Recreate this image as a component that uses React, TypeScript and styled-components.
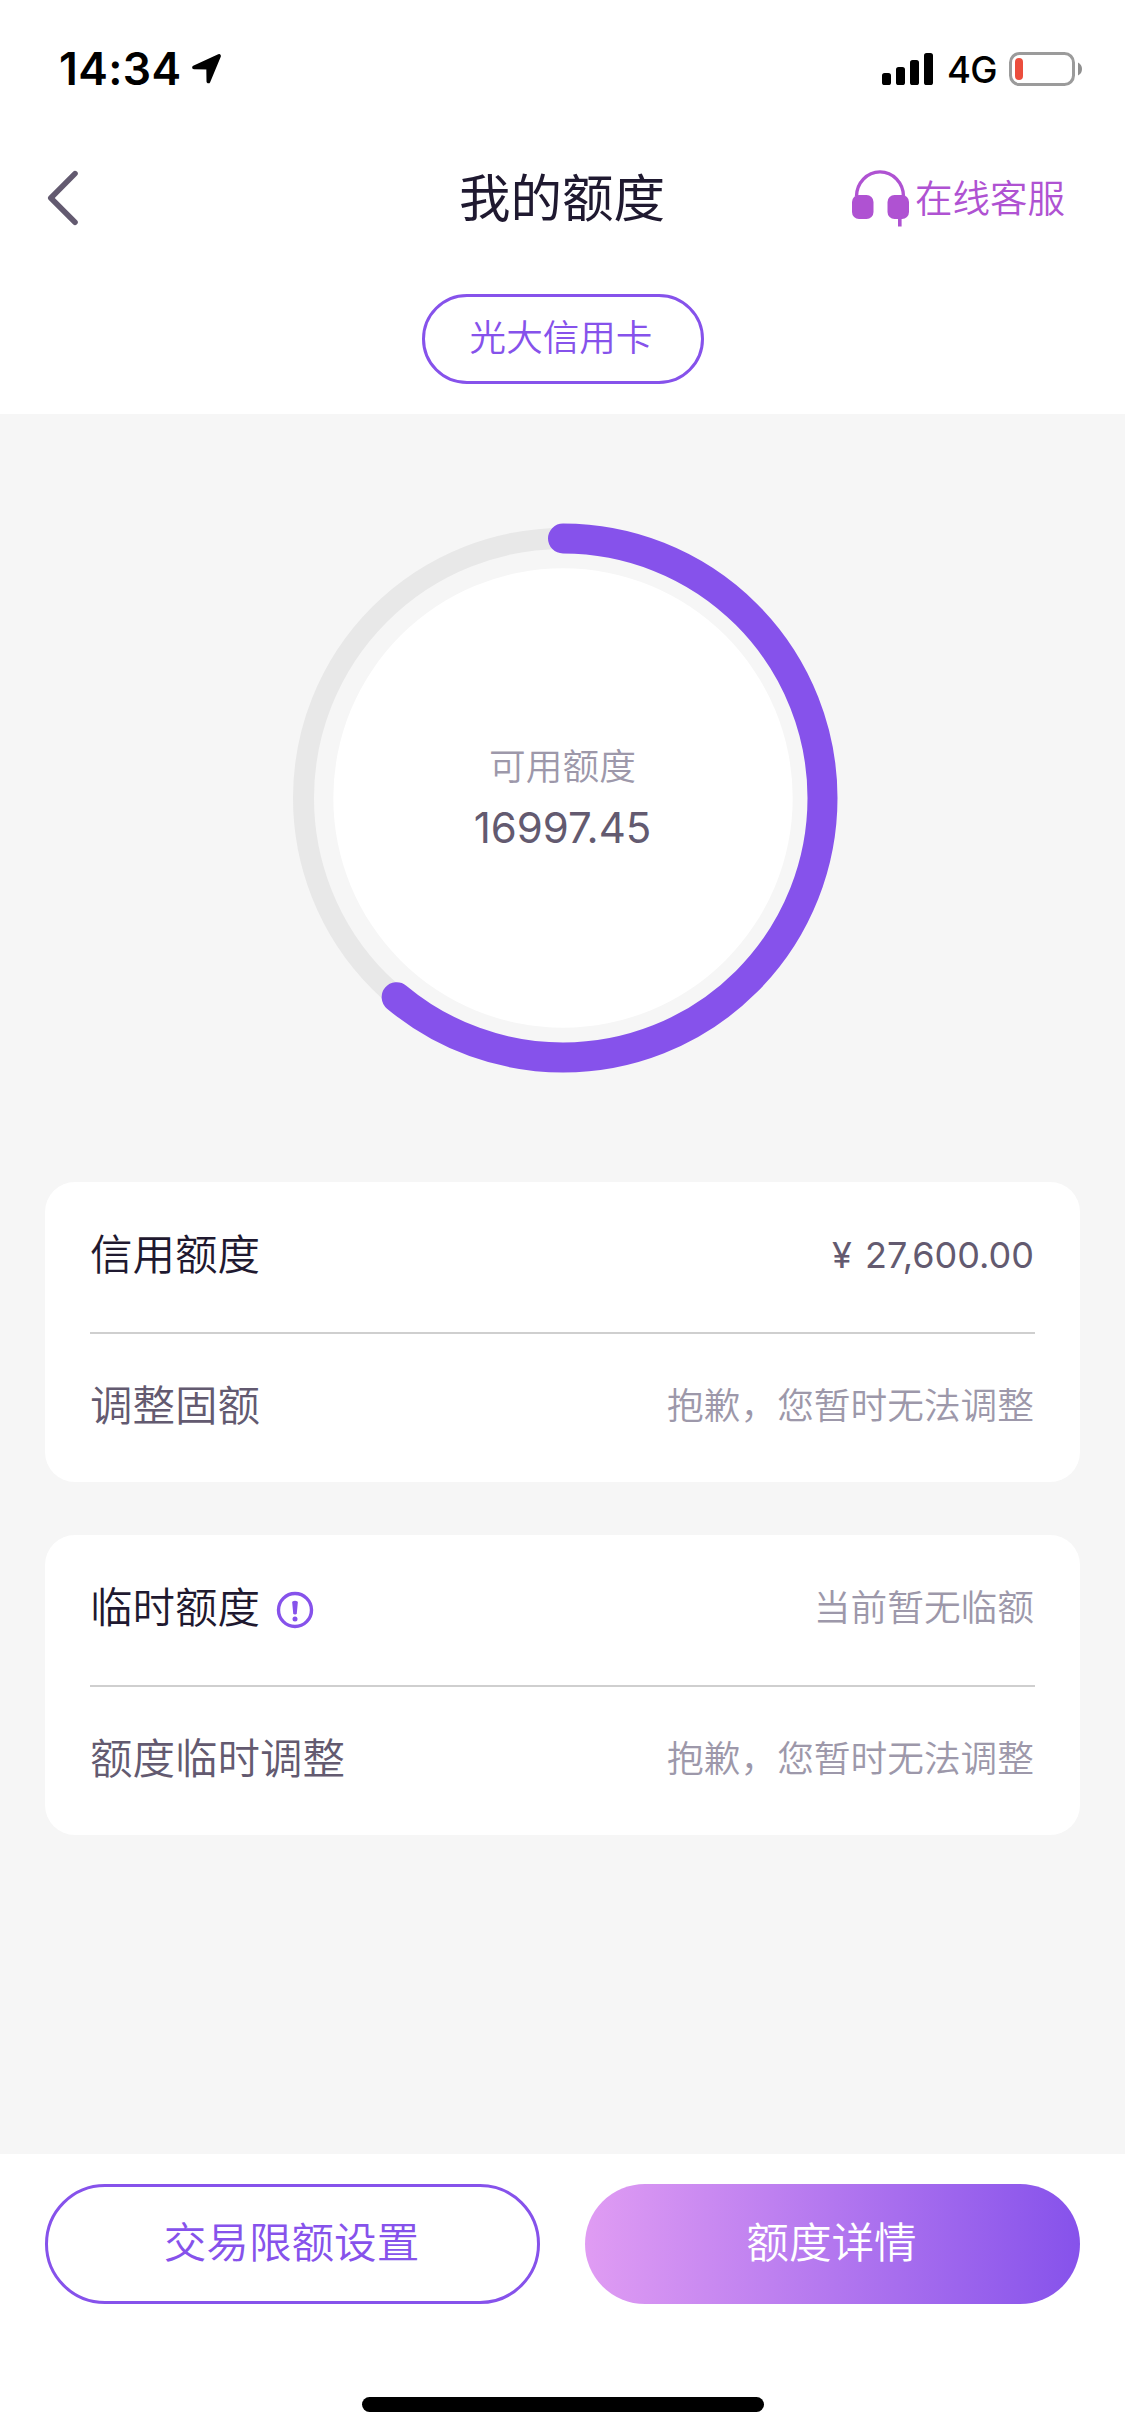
import React from 'react';
import styled, { createGlobalStyle } from 'styled-components';

const colors = {
  ink: '#1f1930',
  plum: '#635a70',
  muted: '#9d98aa',
  violet: '#8652eb',
  orchid: '#af52d2',
  line: '#cfcfcf',
  page: '#f6f6f6',
};

const GlobalStyle = createGlobalStyle`
  * { box-sizing: border-box; }
  body {
    margin: 0;
    background: #fff;
    font-family: Inter, "Noto Sans CJK SC", sans-serif;
    font-weight: 350;
  }
  button { font: inherit; margin: 0; padding: 0; background: none; border: 0; }
`;

const Screen = styled.div`
  width: 1125px;
  height: 2436px;
  display: flex;
  flex-direction: column;
  background: #fff;
`;

const StatusBar = styled.header`
  height: 132px;
  padding: 6px 42px 0 59px;
  display: flex;
  align-items: center;
  justify-content: space-between;
  color: #000;
`;

const StatusGroup = styled.div<{ $gap: number }>`
  display: flex;
  align-items: center;
  gap: ${(p) => p.$gap}px;
`;

const Clock = styled.span`
  width: 121px;
  font-size: 44.5px;
  line-height: 54px;
  font-weight: 600;
  letter-spacing: 0.4px;
  white-space: nowrap;
`;

const Network = styled.span`
  width: 48px;
  font-size: 36.5px;
  line-height: 42px;
  font-weight: 500;
  letter-spacing: -0.8px;
  padding-top: 2px;
`;

const NavBar = styled.nav`
  height: 132px;
  padding: 0 60px 0 46px;
  display: grid;
  grid-template-columns: 1fr auto 1fr;
  align-items: center;
`;

const BackButton = styled.button`
  display: flex;
  justify-self: start;
`;

const Title = styled.h1`
  margin: 0 0 0 13px;
  font-size: 51.5px;
  line-height: 76px;
  font-weight: 400;
  color: ${colors.ink};
`;

const ServiceButton = styled.button`
  display: flex;
  align-items: center;
  justify-self: end;
  gap: 6px;
  color: ${colors.orchid};
  font-size: 37.5px;
  line-height: 56px;
  padding-top: 1px;
`;

const CardTabs = styled.div`
  height: 150px;
  display: flex;
  justify-content: center;
  padding-top: 30px;
`;

const CardTab = styled.button`
  width: 282px;
  height: 90px;
  border: 3px solid ${colors.violet};
  border-radius: 45px;
  color: ${colors.violet};
  font-size: 36.6px;
  line-height: 80px;
  padding: 0 3px 3px 0;
`;

const Content = styled.main`
  flex: 1;
  padding: 109px 45px 0;
  display: flex;
  flex-direction: column;
  align-items: center;
  background: ${colors.page};
`;

const Gauge = styled.section`
  width: 550px;
  height: 550px;
  margin-bottom: 109px;
  display: grid;
  place-items: center;
  > * { grid-area: 1 / 1; }
`;

const GaugeText = styled.div`
  display: flex;
  flex-direction: column;
  align-items: center;
  padding-top: 1px;
`;

const GaugeLabel = styled.span`
  font-size: 36.7px;
  line-height: 54px;
  color: ${colors.muted};
`;

const GaugeValue = styled.span`
  margin-top: 5px;
  font-size: 42px;
  line-height: 58px;
  font-weight: 400;
  color: ${colors.plum};
`;

const Card = styled.section`
  width: 1035px;
  height: 300px;
  padding: 0 45px;
  margin-bottom: 53px;
  border-radius: 30px;
  background: #fff;
`;

const Row = styled.div<{ $divided?: boolean }>`
  height: ${(p) => (p.$divided ? 152 : 148)}px;
  padding-bottom: ${(p) => (p.$divided ? 4 : 5)}px;
  border-bottom: ${(p) => (p.$divided ? `2px solid ${colors.line}` : '0')};
  display: flex;
  align-items: center;
  justify-content: space-between;
`;

const Label = styled.span<{ $strong?: boolean }>`
  display: flex;
  align-items: center;
  gap: 16px;
  font-size: 42.5px;
  line-height: 62px;
  color: ${(p) => (p.$strong ? colors.ink : colors.plum)};
`;

const Note = styled.span`
  padding-right: 1px;
  font-size: 36.7px;
  line-height: 54px;
  color: ${colors.muted};
`;

const Amount = styled.span`
  padding-right: 1px;
  font-size: 36px;
  line-height: 54px;
  font-weight: 400;
  word-spacing: 3px;
  color: ${colors.plum};
`;

const Actions = styled.footer`
  height: 243px;
  padding: 30px 45px 0;
  display: grid;
  grid-template-columns: 1fr 1fr;
  gap: 45px;
`;

const Action = styled.button<{ $filled?: boolean }>`
  height: 120px;
  border-radius: 60px;
  border: ${(p) => (p.$filled ? '0' : `3px solid ${colors.violet}`)};
  padding: 0 2px 3px 0;
  background: ${(p) =>
    p.$filled ? `linear-gradient(90deg, #e09cf3, ${colors.violet})` : '#fff'};
  color: ${(p) => (p.$filled ? '#fff' : colors.violet)};
  font-size: 42.6px;
  line-height: 62px;
`;

const HomeArea = styled.div`
  height: 39px;
  display: flex;
  justify-content: center;
`;

const HomeIndicator = styled.div`
  width: 402px;
  height: 15px;
  border-radius: 8px;
  background: #000;
`;

const LocationArrow = () => (
  <svg width="32" height="32" viewBox="0 0 32 32">
    <path
      d="M3 14.4 28 3 17.4 28.4 17.2 14.6Z"
      fill="#000"
      stroke="#000"
      strokeWidth="3.8"
      strokeLinejoin="round"
    />
  </svg>
);

const SignalBars = () => (
  <svg width="51" height="32" viewBox="0 0 51 32">
    <rect x="0" y="20" width="9" height="12" rx="2.6" />
    <rect x="14" y="14" width="9" height="18" rx="2.6" />
    <rect x="28" y="7" width="9" height="25" rx="2.6" />
    <rect x="42" y="0" width="9" height="32" rx="2.6" />
  </svg>
);

const Battery = () => (
  <svg width="74" height="34" viewBox="0 0 74 34">
    <rect x="1.5" y="1.5" width="63" height="31" rx="9" fill="none" stroke="#9b9b9b" strokeWidth="3" />
    <rect x="6" y="6" width="8" height="22" rx="4" fill="#eb4d3d" />
    <path d="M69 10.5Q73 12.5 73 17T69 23.5Z" fill="#8f8f8f" />
  </svg>
);

const BackChevron = () => (
  <svg width="34" height="58" viewBox="0 0 34 58">
    <path
      d="M29 4.6 4.8 29 29 53.2"
      fill="none"
      stroke={colors.plum}
      strokeWidth="5.6"
      strokeLinecap="round"
      strokeLinejoin="round"
    />
  </svg>
);

const Headphones = () => (
  <svg width="58" height="58" viewBox="0 0.5 58 58">
    <path d="M5.5 27A23.5 24.6 0 0 1 52.5 27" fill="none" stroke={colors.orchid} strokeWidth="3.4" />
    <rect x="1" y="25.5" width="21.5" height="24" rx="7" fill={colors.orchid} />
    <rect x="36.5" y="25.5" width="21.5" height="24" rx="7" fill={colors.orchid} />
    <rect x="47" y="47" width="3.6" height="10" fill={colors.orchid} />
  </svg>
);

const InfoIcon = () => (
  <svg width="38" height="42" viewBox="0 -4 38 42">
    <circle cx="19" cy="19" r="16.5" fill="none" stroke={colors.violet} strokeWidth="3.4" />
    <path d="M16.2 11.6Q16.2 9.7 19 9.7T21.8 11.6L20.8 22.2Q20.5 23.6 19 23.6T17.2 22.2Z" fill={colors.violet} />
    <circle cx="19" cy="28" r="2.5" fill={colors.violet} />
  </svg>
);

const RING_RADIUS = 259.5;
const RING_LENGTH = 2 * Math.PI * RING_RADIUS;
const RING_SHARE = 0.6105;

const Ring = () => (
  <svg width="550" height="550" viewBox="0 0 550 550">
    <circle cx="275" cy="275" r={RING_RADIUS} fill="none" stroke="#e8e8e8" strokeWidth="21" />
    <circle cx="275" cy="275" r="229.7" fill="#fff" />
    <circle
      cx="275"
      cy="275"
      r={RING_RADIUS}
      fill="none"
      stroke={colors.violet}
      strokeWidth="30"
      strokeLinecap="round"
      strokeDasharray={`${RING_LENGTH * RING_SHARE} ${RING_LENGTH}`}
      transform="rotate(-90 275 275)"
    />
  </svg>
);

export default function App() {
  return (
    <Screen>
      <GlobalStyle />
      <StatusBar>
        <StatusGroup $gap={11}>
          <Clock>14:34</Clock>
          <LocationArrow />
        </StatusGroup>
        <StatusGroup $gap={14}>
          <SignalBars />
          <Network>4G</Network>
          <Battery />
        </StatusGroup>
      </StatusBar>
      <NavBar>
        <BackButton aria-label="返回">
          <BackChevron />
        </BackButton>
        <Title>我的额度</Title>
        <ServiceButton>
          <Headphones />
          在线客服
        </ServiceButton>
      </NavBar>
      <CardTabs>
        <CardTab>光大信用卡</CardTab>
      </CardTabs>
      <Content>
        <Gauge>
          <Ring />
          <GaugeText>
            <GaugeLabel>可用额度</GaugeLabel>
            <GaugeValue>16997.45</GaugeValue>
          </GaugeText>
        </Gauge>
        <Card>
          <Row $divided>
            <Label $strong>信用额度</Label>
            <Amount>¥ 27,600.00</Amount>
          </Row>
          <Row>
            <Label>调整固额</Label>
            <Note>抱歉，您暂时无法调整</Note>
          </Row>
        </Card>
        <Card>
          <Row $divided>
            <Label $strong>
              临时额度
              <InfoIcon />
            </Label>
            <Note>当前暂无临额</Note>
          </Row>
          <Row>
            <Label>额度临时调整</Label>
            <Note>抱歉，您暂时无法调整</Note>
          </Row>
        </Card>
      </Content>
      <Actions>
        <Action>交易限额设置</Action>
        <Action $filled>额度详情</Action>
      </Actions>
      <HomeArea>
        <HomeIndicator />
      </HomeArea>
    </Screen>
  );
}
